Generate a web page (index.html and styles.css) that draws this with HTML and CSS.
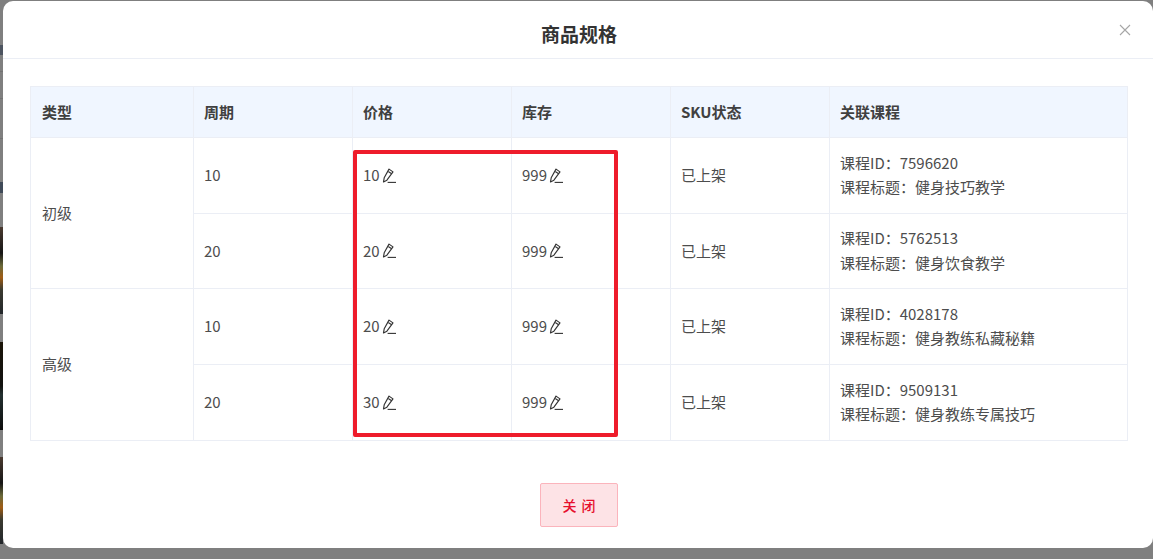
FILE: index.html
```html
<!DOCTYPE html>
<html lang="zh-CN">
<head>
<meta charset="utf-8">
<title>商品规格</title>
<link rel="stylesheet" href="styles.css">
</head>
<body>
<svg width="0" height="0" class="defs" aria-hidden="true">
  <symbol id="pen" viewBox="0 0 15 15">
    <path d="M7 1.1 11 3.9 4.9 12.2 1.5 13.9 2.2 9.8Z M5.6 3.1 9.6 5.8" fill="none" stroke="currentColor" stroke-width="1.15" stroke-linejoin="round"/>
    <path d="M5.6 14.4H14" fill="none" stroke="currentColor" stroke-width="1.1"/>
  </symbol>
</svg>
<div class="backdrop">
  <div class="strip">
    <span class="s s-top"></span><span class="s s-text"></span><span class="s s-gap1"></span><span class="s s-img"></span><span class="s s-gap2"></span><span class="s s-dark"></span><span class="s s-gap3"></span><span class="s s-img"></span><span class="s s-end"></span>
  </div>
  <section class="modal">
    <header class="modal-head">
      <h2 class="modal-title">商品规格</h2>
      <svg class="close" width="12" height="12" viewBox="0 0 12 12"><path d="M1 1 11 11M11 1 1 11" stroke="currentColor" stroke-width="1.1" fill="none"/></svg>
    </header>
    <div class="modal-body">
      <table class="sku">
        <colgroup><col class="c1"><col class="c2"><col class="c3"><col class="c4"><col class="c5"><col class="c6"></colgroup>
        <thead>
          <tr><th class="lead">类型</th><th>周期</th><th>价格</th><th>库存</th><th>SKU状态</th><th>关联课程</th></tr>
        </thead>
        <tbody>
          <tr class="tall">
            <td class="lead" rowspan="2">初级</td><td>10</td>
            <td><span class="edit">10<svg class="pen"><use href="#pen"/></svg></span></td>
            <td><span class="edit">999<svg class="pen"><use href="#pen"/></svg></span></td>
            <td>已上架</td>
            <td>课程ID：7596620<br>课程标题：健身技巧教学</td>
          </tr>
          <tr class="short">
            <td>20</td>
            <td><span class="edit">20<svg class="pen"><use href="#pen"/></svg></span></td>
            <td><span class="edit">999<svg class="pen"><use href="#pen"/></svg></span></td>
            <td>已上架</td>
            <td>课程ID：5762513<br>课程标题：健身饮食教学</td>
          </tr>
          <tr class="tall">
            <td class="lead" rowspan="2">高级</td><td>10</td>
            <td><span class="edit">20<svg class="pen"><use href="#pen"/></svg></span></td>
            <td><span class="edit">999<svg class="pen"><use href="#pen"/></svg></span></td>
            <td>已上架</td>
            <td>课程ID：4028178<br>课程标题：健身教练私藏秘籍</td>
          </tr>
          <tr class="tall">
            <td>20</td>
            <td><span class="edit">30<svg class="pen"><use href="#pen"/></svg></span></td>
            <td><span class="edit">999<svg class="pen"><use href="#pen"/></svg></span></td>
            <td>已上架</td>
            <td>课程ID：9509131<br>课程标题：健身教练专属技巧</td>
          </tr>
        </tbody>
      </table>
      <div class="highlight"></div>
    </div>
    <footer class="modal-foot"><button class="btn-close" type="button">关 闭</button></footer>
  </section>
</div>
</body>
</html>
```
FILE: styles.css
```css
* { box-sizing: border-box; }
html, body { margin: 0; height: 100%; overflow: hidden; }
body { font-family: "Noto Sans CJK SC", "Noto Sans", sans-serif; color: #404040; font-size: 15px; }
.defs { position: absolute; }
.backdrop { display: flex; height: 559px; background: #7f7f7f; padding-top: 1px; padding-bottom: 11px; }
.strip { width: 3px; flex: none; display: flex; flex-direction: column; margin-top: -1px; margin-bottom: -11px; }
.s { display: block; flex: none; }
.s-top { height: 182px; background: linear-gradient(#7f7f7f 0 45px, #4d5460 45px 55px, #7f7f7f 55px 71px, #727272 71px 72px, #7f7f7f 72px 98px, #727272 98px 99px, #7f7f7f 99px 138px, #727272 138px 139px, #7f7f7f 139px); }
.s-text { height: 11px; background: #3f4a58; }
.s-gap1 { height: 34px; background: #7f7f7f; }
.s-img { height: 87px; background: linear-gradient(#4a3a30, #161616 30%, #6b6a3a 45%, #a05c14 58%, #3b3b30 72%, #22262a); }
.s-gap2 { height: 28px; background: #7f7f7f; }
.s-dark { height: 88px; background: linear-gradient(#1a1408, #121210 50%, #233030 60%, #0d0d0d); }
.s-gap3 { height: 27px; background: #7f7f7f; }
.s-end { flex: 1; background: #7f7f7f; }
.modal { flex: 1; display: flex; flex-direction: column; background: #fff; border-radius: 10px; min-width: 0; }
.modal-head { height: 58px; flex: none; display: flex; align-items: center; justify-content: center; position: relative; border-bottom: 1px solid #ebeef5; }
.modal-title { margin: 0; font-size: 19px; font-weight: 700; color: #333; line-height: 24px; position: relative; top: 4px; left: 1px; }
.close { position: absolute; top: 23px; right: 22px; color: #a6a6a6; }
.modal-body { flex: none; padding: 27px 25px 0 27px; position: relative; }
.sku { width: 1097px; table-layout: fixed; border-collapse: collapse; font-size: 15px; line-height: 24.5px; }
.c1 { width: 163px; } .c2, .c3, .c4, .c5 { width: 159px; } .c6 { width: 298px; }
.sku th, .sku td { border: 1px solid #ebeef5; padding: 0 10px; text-align: left; vertical-align: middle; }
.sku .lead { padding-left: 11px; }
.sku th { height: 51px; background: #f0f6ff; font-weight: 700; color: #404040; }
.sku td { font-weight: 400; color: #4d4d4d; padding-bottom: .5px; }
.tall td { height: 76px; }
.short td { height: 75px; }
.edit { display: inline-flex; align-items: center; }
.pen { width: 15px; height: 15px; color: #333; margin-left: 2px; flex: none; }
.highlight { position: absolute; left: 350px; top: 91px; width: 265px; height: 287px; border: 4px solid #ee1c2b; border-radius: 2px; pointer-events: none; }
.modal-foot { flex: 1; display: flex; justify-content: center; padding-top: 42px; padding-left: 2px; }
.btn-close { width: 78px; height: 44px; padding: 0 0 0 1px; border: 1px solid #fbb4bc; border-radius: 2px; background: #fde3e6; color: #e60f2d; font: 500 14px "Noto Sans CJK SC", sans-serif; letter-spacing: 1px; }
```
